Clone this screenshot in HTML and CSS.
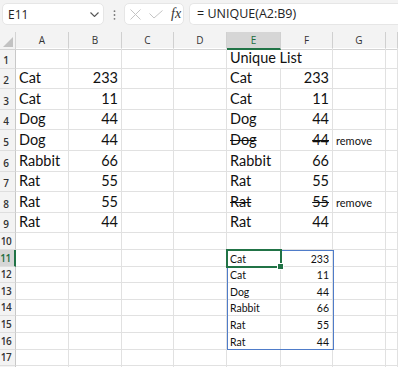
FILE: index.html
```html
<!DOCTYPE html>
<html>
<head>
<meta charset="utf-8">
<link rel="stylesheet" href="styles.css">
</head>
<body>
<div class="toolbar">
  <div class="namebox">
    <span class="ref">E11</span>
    <svg class="chev" width="9" height="5" viewBox="0 0 9 5"><path d="M0.5 0.5 L4.5 4.5 L8.5 0.5" fill="none" stroke="#555" stroke-width="1.1"/></svg>
  </div>
  <svg class="grip" width="3" height="10" viewBox="0 0 3 10"><circle cx="1.5" cy="1.2" r="0.9" fill="#777"/><circle cx="1.5" cy="5" r="0.9" fill="#777"/><circle cx="1.5" cy="8.8" r="0.9" fill="#777"/></svg>
  <div class="fxbox">
    <svg class="ico" width="11" height="11" viewBox="0 0 11 11"><path d="M0.5 0.5 L10.5 10.5 M10.5 0.5 L0.5 10.5" stroke="#c4c4c4" stroke-width="1"/></svg>
    <svg class="ico" width="14" height="9" viewBox="0 0 14 9"><path d="M0.5 3.5 L5 8 L13.5 0.5" fill="none" stroke="#c4c4c4" stroke-width="1"/></svg>
    <span class="fx">fx</span>
  </div>
  <div class="formula">= UNIQUE(A2:B9)</div>
</div>

<div class="sheet">
  <div class="row hdr">
    <div class="corner"><span class="tri"></span></div>
    <div class="ch">A</div><div class="ch">B</div><div class="ch">C</div><div class="ch">D</div>
    <div class="ch on">E</div><div class="ch">F</div><div class="ch">G</div><div class="ch"></div>
  </div>

  <div class="row big"><div class="rh">1</div><div class="c"></div><div class="c"></div><div class="c"></div><div class="c"></div><div class="c flow">Unique List</div><div class="c"></div><div class="c"></div><div class="c"></div></div>
  <div class="row big"><div class="rh">2</div><div class="c">Cat</div><div class="c n">233</div><div class="c"></div><div class="c"></div><div class="c">Cat</div><div class="c n">233</div><div class="c"></div><div class="c"></div></div>
  <div class="row big"><div class="rh">3</div><div class="c">Cat</div><div class="c n">11</div><div class="c"></div><div class="c"></div><div class="c">Cat</div><div class="c n">11</div><div class="c"></div><div class="c"></div></div>
  <div class="row big"><div class="rh">4</div><div class="c">Dog</div><div class="c n">44</div><div class="c"></div><div class="c"></div><div class="c">Dog</div><div class="c n">44</div><div class="c"></div><div class="c"></div></div>
  <div class="row big"><div class="rh">5</div><div class="c">Dog</div><div class="c n">44</div><div class="c"></div><div class="c"></div><div class="c"><s>Dog</s></div><div class="c n"><s>44</s></div><div class="c s">remove</div><div class="c"></div></div>
  <div class="row big"><div class="rh">6</div><div class="c">Rabbit</div><div class="c n">66</div><div class="c"></div><div class="c"></div><div class="c">Rabbit</div><div class="c n">66</div><div class="c"></div><div class="c"></div></div>
  <div class="row big"><div class="rh">7</div><div class="c">Rat</div><div class="c n">55</div><div class="c"></div><div class="c"></div><div class="c">Rat</div><div class="c n">55</div><div class="c"></div><div class="c"></div></div>
  <div class="row big"><div class="rh">8</div><div class="c">Rat</div><div class="c n">55</div><div class="c"></div><div class="c"></div><div class="c"><s>Rat</s></div><div class="c n"><s>55</s></div><div class="c s">remove</div><div class="c"></div></div>
  <div class="row big"><div class="rh">9</div><div class="c">Rat</div><div class="c n">44</div><div class="c"></div><div class="c"></div><div class="c">Rat</div><div class="c n">44</div><div class="c"></div><div class="c"></div></div>

  <div class="row small"><div class="rh">10</div><div class="c"></div><div class="c"></div><div class="c"></div><div class="c"></div><div class="c"></div><div class="c"></div><div class="c"></div><div class="c"></div></div>
  <div class="row small"><div class="rh on">11</div><div class="c"></div><div class="c"></div><div class="c"></div><div class="c"></div><div class="c s">Cat</div><div class="c s n">233</div><div class="c"></div><div class="c"></div></div>
  <div class="row small"><div class="rh">12</div><div class="c"></div><div class="c"></div><div class="c"></div><div class="c"></div><div class="c s">Cat</div><div class="c s n">11</div><div class="c"></div><div class="c"></div></div>
  <div class="row small"><div class="rh">13</div><div class="c"></div><div class="c"></div><div class="c"></div><div class="c"></div><div class="c s">Dog</div><div class="c s n">44</div><div class="c"></div><div class="c"></div></div>
  <div class="row small"><div class="rh">14</div><div class="c"></div><div class="c"></div><div class="c"></div><div class="c"></div><div class="c s">Rabbit</div><div class="c s n">66</div><div class="c"></div><div class="c"></div></div>
  <div class="row small"><div class="rh">15</div><div class="c"></div><div class="c"></div><div class="c"></div><div class="c"></div><div class="c s">Rat</div><div class="c s n">55</div><div class="c"></div><div class="c"></div></div>
  <div class="row small"><div class="rh">16</div><div class="c"></div><div class="c"></div><div class="c"></div><div class="c"></div><div class="c s">Rat</div><div class="c s n">44</div><div class="c"></div><div class="c"></div></div>
  <div class="row small"><div class="rh">17</div><div class="c"></div><div class="c"></div><div class="c"></div><div class="c"></div><div class="c"></div><div class="c"></div><div class="c"></div><div class="c"></div></div>
  <div class="row small"><div class="rh"></div><div class="c"></div><div class="c"></div><div class="c"></div><div class="c"></div><div class="c"></div><div class="c"></div><div class="c"></div><div class="c"></div></div>

  <div class="spill"></div>
  <div class="active"><span class="handle"></span></div>
</div>
</body>
</html>
```

FILE: styles.css
```css
html, body {
  margin: 0;
  padding: 0;
  background: #ffffff;
  overflow: hidden;
}
body {
  width: 398px;
  height: 367px;
  font-family: Lato, "Open Sans", sans-serif;
  color: #000;
}

/* ---------- toolbar ---------- */
.toolbar {
  height: 32px;
  box-sizing: border-box;
  background: #f3f3f3;
  display: flex;
  align-items: flex-start;
  padding: 3px 0 0 2px;
  font-family: "Open Sans", "Noto Sans", sans-serif;
}
.namebox {
  width: 102px;
  height: 22px;
  box-sizing: border-box;
  background: #fff;
  border: 1px solid #e6e6e6;
  border-radius: 5px;
  display: flex;
  align-items: center;
  justify-content: space-between;
  padding: 0 4px 0 5px;
  flex: none;
}
.ref {
  font-size: 12px;
  color: #222;
}
.chev { margin-top: 1px; }
.grip {
  margin: 7px 0 0 9px;
  flex: none;
}
.fxbox {
  margin-left: 8px;
  width: 60px;
  height: 22px;
  box-sizing: border-box;
  background: #fff;
  border: 1px solid #e6e6e6;
  border-radius: 5px;
  display: flex;
  align-items: center;
  padding-left: 5px;
  flex: none;
}
.fxbox .ico { flex: none; }
.fxbox .ico + .ico { margin-left: 8px; }
.fx {
  margin-left: 8px;
  font-family: "Liberation Serif", serif;
  font-style: italic;
  font-size: 14px;
  color: #333;
}
.formula {
  margin-left: 5px;
  flex: 1;
  height: 22px;
  box-sizing: border-box;
  background: #fff;
  border: 1px solid #e6e6e6;
  border-right: none;
  border-radius: 5px 0 0 5px;
  padding-left: 7px;
  font-size: 12.5px;
  line-height: 20px;
  color: #222;
  white-space: nowrap;
}

/* ---------- sheet ---------- */
.sheet {
  position: relative;
}
.row {
  display: grid;
  grid-template-columns: 16px 53px 53px 52px 53px 54px 52px 53px 12px;
}
.row.hdr { height: 16px; background: #f3f3f3; }
.row.big { height: 20.6px; }
.row.small { height: 16.6px; }

.corner {
  position: relative;
  border-right: 1px solid #d4d4d4;
  border-bottom: 1px solid #d4d4d4;
  box-sizing: border-box;
}
.tri {
  position: absolute;
  right: 2px;
  bottom: 2px;
  width: 0;
  height: 0;
  border-left: 10px solid transparent;
  border-bottom: 10px solid #c2c2c2;
}
.ch {
  box-sizing: border-box;
  border-right: 1px solid #d0d0d0;
  border-bottom: 1px solid #d4d4d4;
  font-family: "Open Sans", "Noto Sans", sans-serif;
  font-size: 10px;
  color: #333;
  text-align: center;
  line-height: 16px;
}
.ch.on {
  background: #d6d6d6;
  color: #1b6c3e;
  border-bottom: 2px solid #217346;
}

.rh {
  box-sizing: border-box;
  background: #f3f3f3;
  border-right: 1px solid #c8c8c8;
  border-bottom: 1px solid #dedede;
  font-family: "Open Sans", "Noto Sans", sans-serif;
  font-size: 10px;
  font-weight: 600;
  color: #333;
  display: flex;
  align-items: flex-end;
  justify-content: center;
  padding: 0 3px 1px 0;
  letter-spacing: -0.4px;
}
.rh.on {
  background: #d6d6d6;
  color: #1b6c3e;
  border-right: 2px solid #217346;
}

.c {
  box-sizing: border-box;
  border-right: 1px solid #e1e1e1;
  border-bottom: 1px solid #e1e1e1;
  font-size: 14.5px;
  line-height: 16px;
  padding: 0 3px 2px 3px;
  display: flex;
  align-items: flex-end;
  white-space: nowrap;
  color: #111;
}
.c.n { justify-content: flex-end; }
.c.flow { border-right: none; overflow: visible; }
.c.s {
  font-size: 10.5px;
  line-height: 12px;
  padding-bottom: 1px;
}
.row.big .c.s { font-size: 11px; padding-bottom: 3px; }

/* ---------- overlays ---------- */
.spill {
  position: absolute;
  left: 227px;
  top: 218px;
  width: 107px;
  height: 100px;
  box-sizing: border-box;
  border: 1px solid #4f7cc9;
  pointer-events: none;
}
.active {
  position: absolute;
  left: 226px;
  top: 217px;
  width: 56px;
  height: 19px;
  box-sizing: border-box;
  border: 2px solid #217346;
}
.handle {
  position: absolute;
  right: -4px;
  bottom: -4px;
  width: 5px;
  height: 5px;
  background: #217346;
  border: 1px solid #fff;
}
```
